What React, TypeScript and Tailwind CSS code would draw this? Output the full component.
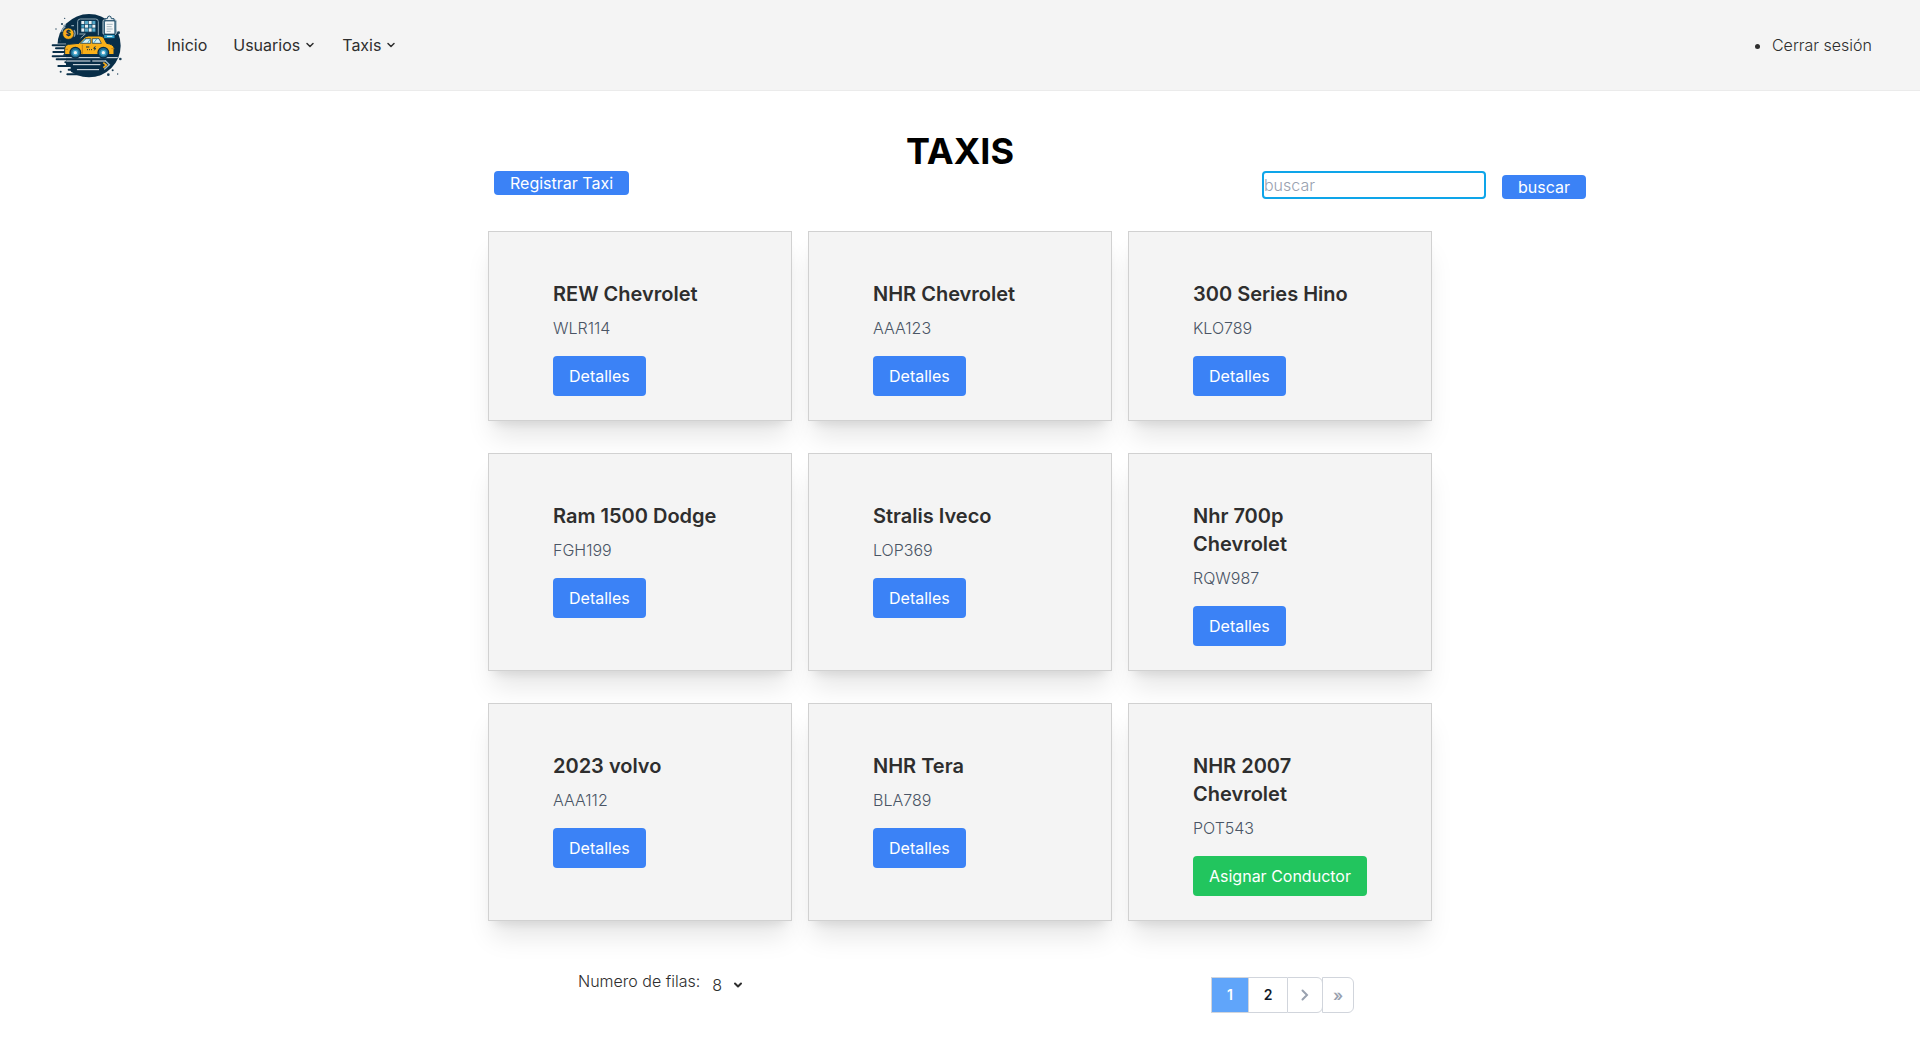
import { ChevronDown } from "lucide-react";

type Taxi = { name: string; plate: string; unassigned?: boolean };

const taxis: Taxi[] = [
  { name: "REW Chevrolet", plate: "WLR114" },
  { name: "NHR Chevrolet", plate: "AAA123" },
  { name: "300 Series Hino", plate: "KLO789" },
  { name: "Ram 1500 Dodge", plate: "FGH199" },
  { name: "Stralis Iveco", plate: "LOP369" },
  { name: "Nhr 700p Chevrolet", plate: "RQW987" },
  { name: "2023 volvo", plate: "AAA112" },
  { name: "NHR Tera", plate: "BLA789" },
  { name: "NHR 2007 Chevrolet", plate: "POT543", unassigned: true },
];

function Logo() {
  return (
    <svg viewBox="30 30 225 210" className="h-[70px] w-[75px]" role="img" aria-label="Taxis">
      <circle cx="147" cy="137" r="95" fill="#082e48" />
      <g fill="#f4f4f4">
        <rect x="30" y="131" width="48" height="43" />
        <rect x="42" y="176" width="36" height="58" />
        <rect x="70" y="198" width="22" height="38" />
      </g>
      <path
        d="M38 136H92M48 145H82M40 156H88M38 169H110M50 178H190M76 187H190M55 198H196M86 209H190M82 223H180"
        stroke="#082e48"
        strokeWidth="6"
        strokeLinecap="round"
      />
      <g stroke="#e8eef1" strokeWidth="3" strokeLinecap="round" fill="none">
        <path d="M60 173H232M80 183H150M158 183H196M100 194H180M112 209H176" />
        <path d="M196 182l12 12-14 13" stroke="#9db7c4" strokeWidth="4" />
      </g>
      <path d="M190 188l9 7-9 8" stroke="#f6ab18" strokeWidth="5" fill="none" />
      <g fill="none" stroke="#8fa8b5" strokeWidth="3">
        <path d="M113 104V65q0-8 8-8h46q8 0 8 8v42" />
        <path d="M118 102h18l-14 12" />
      </g>
      <rect x="122" y="61" width="46" height="37" rx="2" fill="#0d3a57" />
      <g fill="#e9f0f3">
        <rect x="124" y="63" width="9" height="9" /><rect x="146" y="63" width="9" height="9" />
        <rect x="135" y="74" width="9" height="9" /><rect x="157" y="74" width="9" height="9" />
        <rect x="124" y="85" width="9" height="10" /><rect x="146" y="85" width="9" height="10" />
      </g>
      <g fill="#55a9ca">
        <rect x="135" y="63" width="9" height="9" /><rect x="157" y="63" width="9" height="9" />
        <rect x="124" y="74" width="9" height="9" /><rect x="146" y="74" width="9" height="9" />
        <rect x="135" y="85" width="9" height="10" /><rect x="157" y="85" width="9" height="10" />
      </g>
      <rect x="189" y="59" width="40" height="45" rx="5" fill="#35607a" stroke="#b4c6cf" strokeWidth="3" />
      <rect x="195" y="64" width="28" height="37" rx="2" fill="#f5f8f9" />
      <path d="M195 62v-6h7q0-8 6-8t6 8h8v6z" fill="#e4edf1" stroke="#24506b" strokeWidth="3" />
      <path d="M200 73h18M200 80h15M200 87h18M200 94h12" stroke="#7f97a4" strokeWidth="2" />
      <rect x="191" y="103" width="34" height="13" rx="3" fill="#2e9cc4" stroke="#082e48" strokeWidth="3" />
      <path d="M201 109h16" stroke="#fff" strokeWidth="3" />
      <path d="M66 96a19 19 0 0 1 10-16M102 90a19 19 0 0 1 0 20M70 78l8-4M94 77h8" stroke="#8fa8b5" strokeWidth="4" fill="none" />
      <circle cx="85" cy="101" r="17" fill="#f9ae18" stroke="#082e48" strokeWidth="2" />
      <text x="85" y="109" textAnchor="middle" fontSize="23" fontWeight="800" fontFamily="Inter, sans-serif" fill="#082e48">$</text>
      <path
        d="M74 164V145q0-10 11-12l32-3 15-16q5-6 14-6h34q8 0 12 7l8 15q20 3 22 13v21z"
        fill="#f9b019"
        stroke="#082e48"
        strokeWidth="3"
        strokeLinejoin="round"
      />
      <path d="M121 130l14-14h17v14zM157 116h20l7 14h-27z" fill="#d4f0f7" stroke="#082e48" strokeWidth="2" />
      <path d="M125 129l13-12M143 129l8-12M161 129l10-13" stroke="#46a6c9" strokeWidth="3" />
      <path d="M127 134v30M74 148h10M214 146h9" stroke="#c47f12" strokeWidth="3" />
      <path d="M138 141h10M141 149h3M147 149h3M153 149h3M166 139l-5 6h6l-4 6" stroke="#082e48" strokeWidth="3" fill="none" />
      <path d="M70 165h156" stroke="#082e48" strokeWidth="5" />
      <g fill="#1e6e93" stroke="#082e48" strokeWidth="4">
        <circle cx="106" cy="158" r="16" /><circle cx="190" cy="158" r="16" />
      </g>
      <g fill="#f3f5f6" stroke="#43a6ca" strokeWidth="4">
        <circle cx="106" cy="158" r="7" /><circle cx="190" cy="158" r="7" />
      </g>
      <g fill="#1d4058">
        <circle cx="66" cy="72" r="3" /><circle cx="48" cy="87" r="2" /><circle cx="236" cy="98" r="4" />
        <circle cx="241" cy="177" r="4" /><circle cx="62" cy="215" r="3" /><circle cx="218" cy="211" r="3" />
        <circle cx="205" cy="224" r="4" /><circle cx="233" cy="222" r="2" /><circle cx="61" cy="122" r="3" />
        <circle cx="74" cy="55" r="2" />
      </g>
    </svg>
  );
}

function TaxiCard({ taxi }: { taxi: Taxi }) {
  return (
    <article className="border border-[#d1d1d1] bg-[#f4f4f4] px-16 pt-12 pb-6 shadow-xl">
      <h2 className="text-xl leading-7 font-semibold text-[#2e2e2e]">{taxi.name}</h2>
      <p className="mt-2 font-light text-gray-600">{taxi.plate}</p>
      {taxi.unassigned ? (
        <button className="mt-4 rounded bg-[#22c55e] px-4 py-2 whitespace-nowrap text-white">Asignar Conductor</button>
      ) : (
        <button className="mt-4 rounded bg-[#3b82f6] px-4 py-2 text-white">Detalles</button>
      )}
    </article>
  );
}

export default function App() {
  return (
    <div className="min-h-screen bg-white font-['Inter',sans-serif] text-base text-[#2e2e2e]">
      <header className="flex items-center justify-between border-b border-[#ebebeb] bg-[#f4f4f4] py-2.5 pr-12 pl-[50px]">
        <div className="flex items-center">
          <Logo />
          <nav className="ml-[42px] flex items-center gap-[26px]" aria-label="Principal">
            <a href="#inicio">Inicio</a>
            <button className="flex items-center gap-1">
              Usuarios <ChevronDown size={12} strokeWidth={3} />
            </button>
            <button className="flex items-center gap-1">
              Taxis <ChevronDown size={12} strokeWidth={3} />
            </button>
          </nav>
        </div>
        <ul className="list-disc">
          <li className="font-light">
            <a href="#salir">Cerrar sesión</a>
          </li>
        </ul>
      </header>

      <main className="mx-auto max-w-[960px] pt-10">
        <h1 className="text-center text-4xl leading-10 font-bold text-black">TAXIS</h1>
        <div className="-mr-[146px] flex items-start justify-between pl-3.5">
          <button className="rounded bg-[#3b82f6] px-4 text-white">Registrar Taxi</button>
          <form className="flex items-end gap-4" onSubmit={(e) => e.preventDefault()}>
            <input
              type="text"
              aria-label="buscar"
              placeholder="buscar"
              className="h-7 w-56 rounded border-2 border-[#0ea5e9] font-light outline-none placeholder:text-gray-400"
            />
            <button className="rounded bg-[#3b82f6] px-4 text-white">buscar</button>
          </form>
        </div>

        <section className="mx-2 mt-8 grid grid-cols-3 gap-x-4 gap-y-8" aria-label="Taxis">
          {taxis.map((t) => (
            <TaxiCard key={t.name} taxi={t} />
          ))}
        </section>

        <div className="mt-12 flex items-start justify-between pr-[86px] pl-[98px]">
          <div className="flex items-start font-light">
            <label htmlFor="filas">Numero de filas:</label>
            <div className="relative mt-1 ml-2 flex items-center">
              <select id="filas" defaultValue="8" className="w-9 appearance-none bg-transparent pl-1">
                <option>8</option>
                <option>16</option>
              </select>
              <ChevronDown size={12} strokeWidth={4} className="pointer-events-none absolute right-0" />
            </div>
          </div>
          <nav className="mt-2 flex h-9 text-sm font-semibold" aria-label="Paginación">
            <button className="w-[38px] border border-gray-300 bg-[#60a5fa] text-white" aria-current="page">1</button>
            <button className="w-[38px] border-y border-gray-300 text-gray-900">2</button>
            <button className="w-9 rounded-r-md border border-gray-300 text-gray-400" aria-label="Siguiente">
              <svg viewBox="0 0 20 20" className="mx-auto size-5" fill="none" stroke="currentColor" strokeWidth="2" strokeLinecap="round">
                <path d="M7.500 5.500L12 10l-4.500 4.500" />
              </svg>
            </button>
            <button className="-ml-px w-8 rounded-r-md border border-gray-300 text-base text-gray-400" aria-label="Última">»</button>
          </nav>
        </div>
      </main>
    </div>
  );
}
